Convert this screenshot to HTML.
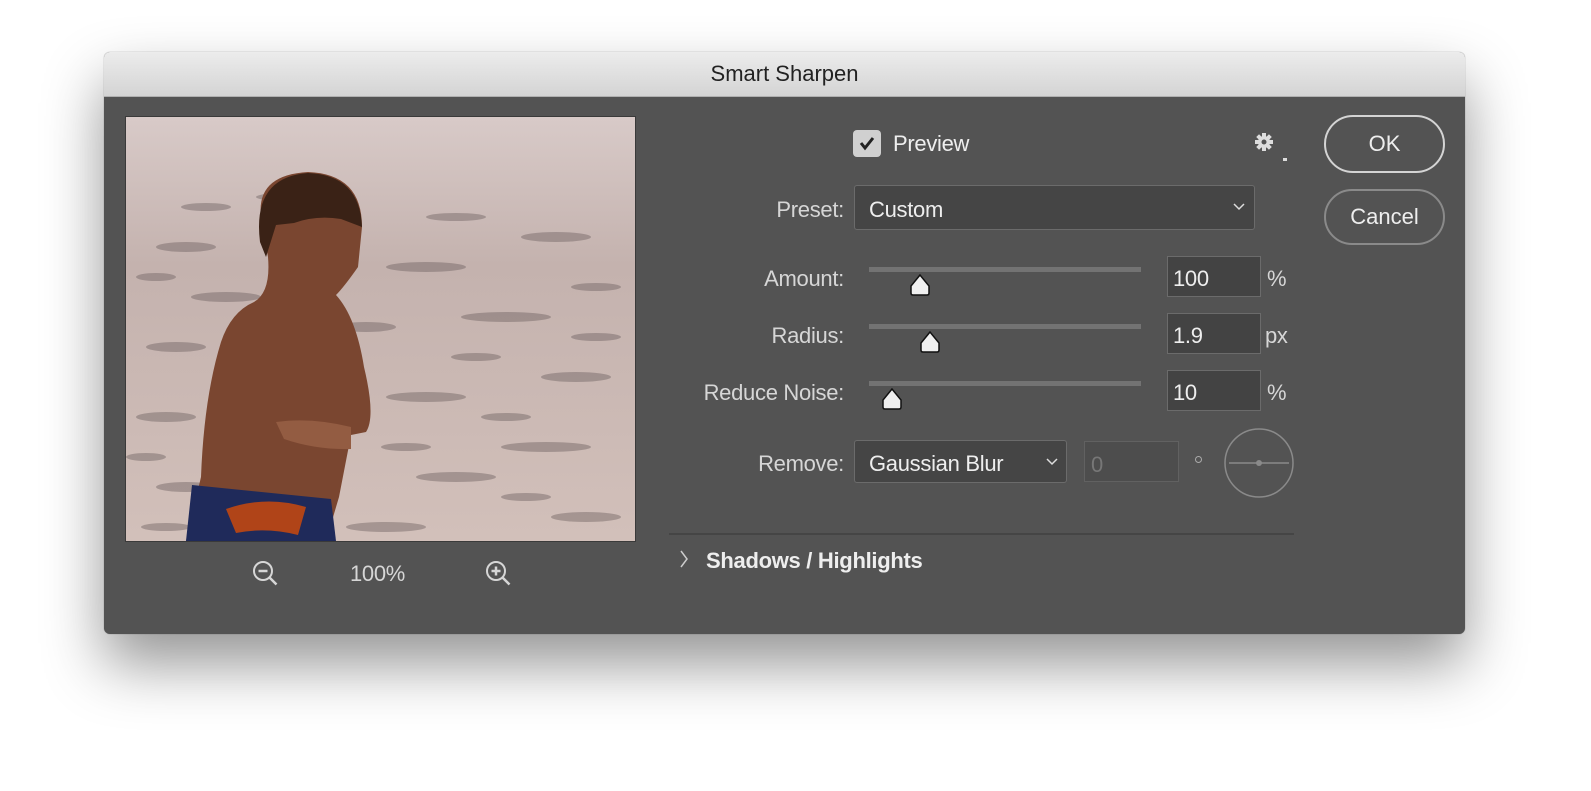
<!DOCTYPE html>
<html><head><meta charset="utf-8"><style>
body{margin:0;width:1591px;height:791px;background:#fff;position:relative;overflow:hidden;font-family:"Liberation Sans",sans-serif}
.dlg{position:absolute;left:104px;top:52px;width:1361px;height:582px;border-radius:6px;background:#535353;box-shadow:0 30px 60px rgba(0,0,0,.42),0 0 1px rgba(0,0,0,.4);overflow:hidden}
.tb{height:44px;background:linear-gradient(#ececec,#d4d4d4);border-bottom:1px solid #b0b0b0;text-align:center;line-height:44px;font-size:22px;color:#222}
.a{position:absolute;color:#d6d6d6;font-size:22px;white-space:nowrap;letter-spacing:-0.3px}
.r{text-align:right}
.box{position:absolute;background:#434343;border:1px solid #6b6b6b;box-sizing:border-box}
.sl{position:absolute;height:5px;background:#737373;left:765px;width:272px}
.th{position:absolute;width:24px;height:24px}
.btn{position:absolute;border:2px solid #d4d4d4;border-radius:30px;color:#eee;font-size:22px;text-align:center;box-sizing:border-box}
</style></head><body>
<div class="dlg">
<div class="tb">Smart Sharpen</div>
<div style="position:absolute;left:21px;top:64px;width:511px;height:426px;background:#3a3a3a"></div>
<svg style="position:absolute;left:22px;top:65px" width="509" height="424" viewBox="0 0 509 424">
<defs><linearGradient id="g" x1="0" y1="0" x2="0" y2="1"><stop offset="0" stop-color="#d8cac8"/><stop offset=".35" stop-color="#c4b2ae"/><stop offset="1" stop-color="#d2c0ba"/></linearGradient></defs>
<rect width="509" height="424" fill="url(#g)"/>
<g fill="#6f6262" opacity=".45">
<ellipse cx="60" cy="130" rx="30" ry="5"/><ellipse cx="300" cy="150" rx="40" ry="5"/><ellipse cx="430" cy="120" rx="35" ry="5"/>
<ellipse cx="380" cy="200" rx="45" ry="5"/><ellipse cx="50" cy="230" rx="30" ry="5"/><ellipse cx="450" cy="260" rx="35" ry="5"/>
<ellipse cx="300" cy="280" rx="40" ry="5"/><ellipse cx="40" cy="300" rx="30" ry="5"/><ellipse cx="420" cy="330" rx="45" ry="5"/>
<ellipse cx="330" cy="360" rx="40" ry="5"/><ellipse cx="60" cy="370" rx="30" ry="5"/><ellipse cx="460" cy="400" rx="35" ry="5"/>
<ellipse cx="260" cy="410" rx="40" ry="5"/><ellipse cx="100" cy="180" rx="35" ry="5"/><ellipse cx="240" cy="210" rx="30" ry="5"/>
<ellipse cx="470" cy="170" rx="25" ry="4"/><ellipse cx="350" cy="240" rx="25" ry="4"/><ellipse cx="30" cy="160" rx="20" ry="4"/>
<ellipse cx="470" cy="220" rx="25" ry="4"/><ellipse cx="380" cy="300" rx="25" ry="4"/><ellipse cx="280" cy="330" rx="25" ry="4"/>
<ellipse cx="20" cy="340" rx="20" ry="4"/><ellipse cx="400" cy="380" rx="25" ry="4"/><ellipse cx="40" cy="410" rx="25" ry="4"/>
<ellipse cx="160" cy="80" rx="30" ry="4"/><ellipse cx="330" cy="100" rx="30" ry="4"/><ellipse cx="80" cy="90" rx="25" ry="4"/>
</g>
<path d="M135 100 Q130 58 182 55 Q236 57 236 110 L232 150 Q218 170 210 178 Q230 200 238 250 Q250 300 240 315 L225 318 L213 380 L200 424 L60 424 L75 360 Q78 280 95 225 Q105 195 128 185 Q145 175 142 140 Z" fill="#7a4630"/>
<path d="M134 125 Q126 60 182 56 Q234 58 236 110 L215 102 Q190 98 168 106 L150 108 L140 140 Z" fill="#3a2216"/>
<path d="M150 305 Q185 300 225 310 L225 332 Q190 333 158 322 Z" fill="#935c42"/>
<path d="M66 368 L205 382 L210 424 L60 424 Z" fill="#1f2a5a"/>
<path d="M100 392 Q140 378 180 390 L172 418 Q140 410 110 416 Z" fill="#b04418"/>
</svg>
<svg style="position:absolute;left:147px;top:507px" width="30" height="30" viewBox="0 0 30 30" fill="none" stroke="#d6d6d6" stroke-width="2"><circle cx="12" cy="12" r="9"/><path d="M7.5 12h9M18.5 18.5l7 7" stroke-width="2.5"/></svg>
<div class="a" style="left:246px;top:509px">100%</div>
<svg style="position:absolute;left:380px;top:507px" width="30" height="30" viewBox="0 0 30 30" fill="none" stroke="#d6d6d6" stroke-width="2"><circle cx="12" cy="12" r="9"/><path d="M7.5 12h9M12 7.5v9M18.5 18.5l7 7" stroke-width="2.5"/></svg>

<div style="position:absolute;left:749px;top:78px;width:28px;height:27px;background:#d0d0d0;border-radius:4px"></div>
<svg style="position:absolute;left:749px;top:78px" width="28" height="27"><path d="M8 13l4 5 8-10" stroke="#222" stroke-width="3" fill="none"/></svg>
<div class="a" style="left:789px;top:79px;color:#eee">Preview</div>
<svg style="position:absolute;left:1150px;top:80px" width="20" height="20" viewBox="0 0 20 20"><g fill="#ddd"><circle cx="10" cy="10" r="6"/><rect x="8" y="1" width="4" height="18"/><rect x="1" y="8" width="18" height="4"/><rect x="8" y="1" width="4" height="18" transform="rotate(45 10 10)"/><rect x="8" y="1" width="4" height="18" transform="rotate(-45 10 10)"/></g><circle cx="10" cy="10" r="2.5" fill="#535353"/></svg>
<div style="position:absolute;left:1179px;top:106px;width:4px;height:3px;background:#ddd"></div>

<div class="a r" style="left:640px;width:100px;top:145px">Preset:</div>
<div class="box" style="left:750px;top:133px;width:401px;height:45px;border-radius:3px;background:#454545"></div>
<div class="a" style="left:765px;top:145px;color:#eee">Custom</div>
<svg style="position:absolute;left:1128px;top:150px" width="14" height="10"><path d="M2 2l5 5 5-5" stroke="#ddd" stroke-width="1.5" fill="none"/></svg>

<div class="a r" style="left:540px;width:200px;top:214px">Amount:</div>
<div class="sl" style="top:215px"></div>
<svg class="th" style="left:804px;top:221px"><path d="M12 2L3 13v7q0 2 2 2h14q2 0 2-2v-7z" fill="#f0f0f0" stroke="#111" stroke-width="1.5"/></svg>
<div class="box" style="left:1063px;top:204px;width:94px;height:41px"></div>
<div class="a" style="left:1069px;top:214px;color:#eee">100</div>
<div class="a" style="left:1163px;top:214px">%</div>

<div class="a r" style="left:540px;width:200px;top:271px">Radius:</div>
<div class="sl" style="top:272px"></div>
<svg class="th" style="left:814px;top:278px"><path d="M12 2L3 13v7q0 2 2 2h14q2 0 2-2v-7z" fill="#f0f0f0" stroke="#111" stroke-width="1.5"/></svg>
<div class="box" style="left:1063px;top:261px;width:94px;height:41px"></div>
<div class="a" style="left:1069px;top:271px;color:#eee">1.9</div>
<div class="a" style="left:1161px;top:271px">px</div>

<div class="a r" style="left:540px;width:200px;top:328px">Reduce Noise:</div>
<div class="sl" style="top:329px"></div>
<svg class="th" style="left:776px;top:335px"><path d="M12 2L3 13v7q0 2 2 2h14q2 0 2-2v-7z" fill="#f0f0f0" stroke="#111" stroke-width="1.5"/></svg>
<div class="box" style="left:1063px;top:318px;width:94px;height:41px"></div>
<div class="a" style="left:1069px;top:328px;color:#eee">10</div>
<div class="a" style="left:1163px;top:328px">%</div>

<div class="a r" style="left:540px;width:200px;top:399px">Remove:</div>
<div class="box" style="left:750px;top:388px;width:213px;height:43px;border-radius:3px;background:#454545"></div>
<div class="a" style="left:765px;top:399px;color:#eee">Gaussian Blur</div>
<svg style="position:absolute;left:941px;top:405px" width="14" height="10"><path d="M2 2l5 5 5-5" stroke="#ddd" stroke-width="1.5" fill="none"/></svg>
<div class="box" style="left:980px;top:389px;width:95px;height:41px;background:#4d4d4d;border-color:#616161"></div>
<div class="a" style="left:987px;top:400px;color:#777">0</div>
<div style="position:absolute;left:1091px;top:404px;width:5px;height:5px;border:1.5px solid #aaa;border-radius:50%"></div>
<svg style="position:absolute;left:1119px;top:375px" width="72" height="72"><circle cx="36" cy="36" r="34" fill="none" stroke="#8a8a8a" stroke-width="1.5"/><path d="M6 36h60" stroke="#8a8a8a" stroke-width="1.5"/><circle cx="36" cy="36" r="3" fill="#8a8a8a"/></svg>

<div style="position:absolute;left:565px;top:481px;width:625px;height:2px;background:#454545"></div>
<svg style="position:absolute;left:575px;top:497px" width="10" height="20"><path d="M2 2l6 8-6 8" stroke="#ccc" stroke-width="1.5" fill="none"/></svg>
<div class="a" style="left:602px;top:496px;font-weight:bold;color:#eee">Shadows / Highlights</div>

<div class="btn" style="left:1220px;top:63px;width:121px;height:58px;line-height:54px">OK</div>
<div class="btn" style="left:1220px;top:137px;width:121px;height:56px;line-height:52px;border-color:#8a8a8a">Cancel</div>
</div>
</body></html>
